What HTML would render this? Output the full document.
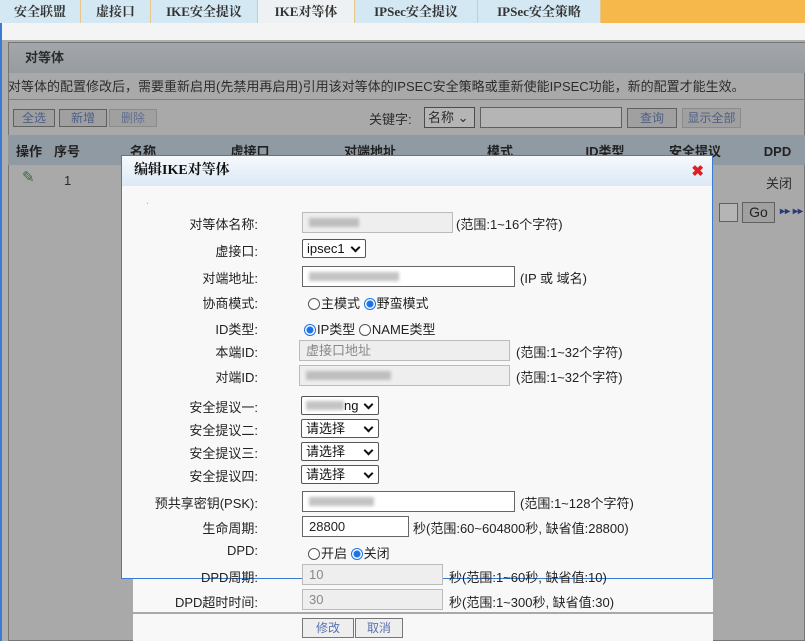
<!DOCTYPE html>
<html><head><meta charset="utf-8"><style>
*{box-sizing:border-box;margin:0;padding:0}
body{width:805px;height:641px;overflow:hidden;position:relative;background:#f4f4f4;font-family:"Liberation Sans","Noto Sans CJK SC",sans-serif;font-size:13px;color:#222}
.abs{position:absolute}
.tabs{left:0;top:0;width:805px;height:23px;background:#f7b84b}
.tab{position:absolute;top:0;height:23px;background:#d3e8f3;border-right:1px solid #e8c88a;font-weight:bold;font-size:13px;line-height:23px;text-align:center;color:#333;font-family:"Liberation Serif","Noto Serif CJK SC",serif}
.tab.on{background:#eef1f3}
.page{left:0;top:23px;width:805px;height:618px;background:#f4f4f4;border-left:2px solid #3a7bd5}
.panel{left:8px;top:42px;width:797px;height:599px;background:#ececec;border:1px solid #999}
.ov{left:2px;top:40px;width:803px;height:601px;background:rgba(60,60,60,0.38)}
.btn{position:absolute;height:18px;border:1px solid #777;background:#ddd;font-size:12px;color:#5a73b0;text-align:center;line-height:16px}
.th{position:absolute;top:142px;height:22px;font-weight:bold;font-size:13px;line-height:20px;text-align:center;color:#111}
.dlg{left:121px;top:155px;width:592px;height:424px;background:#f8f8f8;border:1px solid #3a7bd5}
.dh{left:0;top:0;width:590px;height:30px;background:linear-gradient(#f6f9fc,#dce9f5);font-weight:bold;font-family:"Liberation Serif","Noto Serif CJK SC",serif;font-size:14px;line-height:30px;padding-left:12px;color:#111}
.lbl{position:absolute;right:547px;font-size:13px;color:#222;white-space:nowrap}
.inp{position:absolute;left:302px;height:21px;border:1px solid #bbb;background:#eee;font-size:13px;line-height:19px;padding-left:6px;color:#888}
.inp.w{background:#fff;border-color:#666;color:#222}
.sel{position:absolute;left:302px;height:19px;width:78px;border:1px solid #555;border-radius:2px;background:#fff;font-size:13px;line-height:17px;padding-left:4px;color:#111}
.sel:after{content:"";position:absolute;right:6px;top:4px;width:5px;height:5px;border-right:2px solid #111;border-bottom:2px solid #111;transform:rotate(45deg)}
.hint{position:absolute;font-size:13px;color:#222;white-space:nowrap}
.rad{display:inline-block;width:12px;height:12px;border-radius:50%;border:1px solid #555;vertical-align:-2px;margin-right:1px;background:#fff}
.rad.on{border:1px solid #1a73e8;background:radial-gradient(#1a73e8 3px,#fff 4px)}
.blur{display:inline-block;height:9px;background:#aaa;filter:blur(1.5px);opacity:.7}
</style></head><body>
<div class="abs page"></div>
<div class="abs tabs">
<div class="tab" style="left:0;width:81px">安全联盟</div>
<div class="tab" style="left:81px;width:70px">虚接口</div>
<div class="tab" style="left:151px;width:107px">IKE安全提议</div>
<div class="tab on" style="left:258px;width:97px">IKE对等体</div>
<div class="tab" style="left:355px;width:123px">IPSec安全提议</div>
<div class="tab" style="left:478px;width:123px">IPSec安全策略</div>
</div>
<div class="abs panel">
<div class="abs" style="left:0;top:0;width:797px;height:30px;background:linear-gradient(#e2e8ee,#cfd7df);font-weight:bold;line-height:30px;padding-left:16px">对等体</div>
<div class="abs" style="left:-1px;top:33px;white-space:nowrap;font-size:13px">对等体的配置修改后，需要重新启用(先禁用再启用)引用该对等体的IPSEC安全策略或重新使能IPSEC功能，新的配置才能生效。</div>
<div class="abs" style="left:0;top:56px;width:797px;height:1px;background:#aaa"></div>
</div>
<div class="btn" style="left:13px;top:109px;width:42px">全选</div>
<div class="btn" style="left:59px;top:109px;width:48px">新增</div>
<div class="btn" style="left:109px;top:109px;width:48px;color:#7a8cc0;border-color:#bbb">删除</div>
<div class="abs" style="left:369px;top:109px">关键字:</div>
<div class="abs" style="left:424px;top:107px;width:51px;height:21px;border:1px solid #555;background:#fff;padding-left:3px;line-height:19px">名称 ⌄</div>
<div class="abs" style="left:480px;top:107px;width:142px;height:21px;border:1px solid #777;background:#fff"></div>
<div class="btn" style="left:627px;top:108px;width:50px;height:20px;line-height:18px">查询</div>
<div class="btn" style="left:682px;top:108px;width:59px;height:20px;line-height:18px;border-color:#bbb">显示全部</div>
<div class="abs" style="left:8px;top:135px;width:797px;height:30px;background:#c4d3e2"></div>
<div class="th" style="left:10px;width:38px">操作</div><div class="th" style="left:50px;width:34px">序号</div><div class="th" style="left:88px;width:110px">名称</div><div class="th" style="left:200px;width:100px">虚接口</div><div class="th" style="left:300px;width:140px">对端地址</div><div class="th" style="left:440px;width:120px">模式</div><div class="th" style="left:560px;width:90px">ID类型</div><div class="th" style="left:650px;width:90px">安全提议</div><div class="th" style="left:750px;width:55px">DPD</div>
<div class="abs" style="left:22px;top:168px;color:#2f8a2f;font-size:15px">✎</div>
<div class="abs" style="left:64px;top:173px">1</div>
<div class="abs" style="left:766px;top:173px">关闭</div>
<div class="abs" style="left:719px;top:203px;width:19px;height:19px;border:1px solid #777;background:#fff"></div>
<div class="btn" style="left:742px;top:202px;width:33px;height:21px;color:#111;font-size:14px;line-height:19px">Go</div>
<div class="abs" style="left:780px;top:206px;color:#1a3aa0;font-size:10px;font-weight:bold">▸▸ ▸▸</div>
<div class="abs ov"></div>

<div class="abs" style="left:133px;top:578px;width:580px;height:34px;background:#f8f8f8"></div>
<div class="abs" style="left:133px;top:614px;width:580px;height:27px;background:#f8f8f8"></div>
<div class="btn" style="left:302px;top:618px;width:52px;height:20px;line-height:18px;background:#eee">修改</div>
<div class="btn" style="left:355px;top:618px;width:48px;height:20px;line-height:18px;background:#eee">取消</div>

<div class="abs dlg"><div class="abs dh">编辑IKE对等体</div>
<div class="abs" style="right:8px;top:6px;color:#e02020;font-weight:bold;font-size:15px">✖</div></div>
<div class="abs" style="left:146px;top:202px;font-size:8px;color:#888">ˊ</div>

<div class="lbl" style="top:214px">对等体名称:</div><div class="inp" style="top:212px;width:151px"><span class="blur" style="width:50px"></span></div><div class="hint" style="left:456px;top:214px">(范围:1~16个字符)</div>
<div class="lbl" style="top:241px">虚接口:</div><div class="sel" style="top:239px;width:64px">ipsec1</div>
<div class="lbl" style="top:268px">对端地址:</div><div class="inp w" style="top:266px;width:213px"><span class="blur" style="width:90px"></span></div><div class="hint" style="left:520px;top:268px">(IP 或 域名)</div>
<div class="lbl" style="top:293px">协商模式:</div><div class="hint" style="left:308px;top:293px"><span class="rad"></span>主模式 <span class="rad on"></span>野蛮模式</div>
<div class="lbl" style="top:319px">ID类型:</div><div class="hint" style="left:304px;top:319px"><span class="rad on"></span>IP类型 <span class="rad"></span>NAME类型</div>
<div class="lbl" style="top:342px">本端ID:</div><div class="inp" style="top:340px;width:211px;left:299px">虚接口地址</div><div class="hint" style="left:516px;top:342px">(范围:1~32个字符)</div>
<div class="lbl" style="top:367px">对端ID:</div><div class="inp" style="top:365px;width:211px;left:299px"><span class="blur" style="width:85px"></span></div><div class="hint" style="left:516px;top:367px">(范围:1~32个字符)</div>
<div class="lbl" style="top:397px">安全提议一:</div><div class="sel" style="top:396px;left:301px"><span class="blur" style="width:38px"></span>ng</div>
<div class="lbl" style="top:420px">安全提议二:</div><div class="sel" style="top:419px;left:301px">请选择</div>
<div class="lbl" style="top:443px">安全提议三:</div><div class="sel" style="top:442px;left:301px">请选择</div>
<div class="lbl" style="top:466px">安全提议四:</div><div class="sel" style="top:465px;left:301px">请选择</div>
<div class="lbl" style="top:493px">预共享密钥(PSK):</div><div class="inp w" style="top:491px;width:213px"><span class="blur" style="width:65px"></span></div><div class="hint" style="left:520px;top:493px">(范围:1~128个字符)</div>
<div class="lbl" style="top:518px">生命周期:</div><div class="inp w" style="top:516px;width:107px">28800</div><div class="hint" style="left:413px;top:518px">秒(范围:60~604800秒, 缺省值:28800)</div>
<div class="lbl" style="top:543px">DPD:</div><div class="hint" style="left:308px;top:543px"><span class="rad"></span>开启 <span class="rad on"></span>关闭</div>
<div class="lbl" style="top:567px">DPD周期:</div><div class="inp" style="top:564px;width:141px">10</div><div class="hint" style="left:449px;top:567px">秒(范围:1~60秒, 缺省值:10)</div>
<div class="lbl" style="top:592px">DPD超时时间:</div><div class="inp" style="top:589px;width:141px">30</div><div class="hint" style="left:449px;top:592px">秒(范围:1~300秒, 缺省值:30)</div>
</body></html>
